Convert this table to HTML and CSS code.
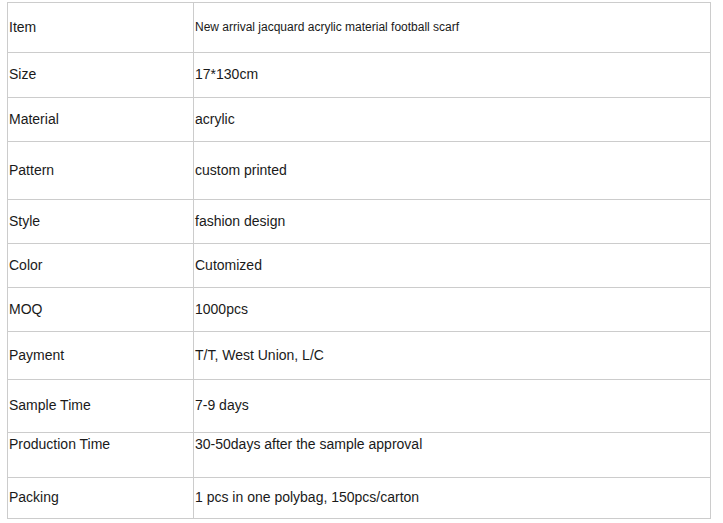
FILE: index.html
```html
<!DOCTYPE html>
<html>
<head>
<meta charset="utf-8">
<link rel="stylesheet" href="styles.css">
</head>
<body>
<table class="spec">
  <colgroup><col class="c-key"><col class="c-val"></colgroup>
  <tbody>
    <tr><td>Item</td><td class="small">New arrival jacquard acrylic material football scarf</td></tr>
    <tr><td>Size</td><td>17*130cm</td></tr>
    <tr><td>Material</td><td>acrylic</td></tr>
    <tr><td>Pattern</td><td>custom printed</td></tr>
    <tr><td>Style</td><td>fashion design</td></tr>
    <tr><td>Color</td><td>Cutomized</td></tr>
    <tr><td>MOQ</td><td>1000pcs</td></tr>
    <tr><td>Payment</td><td>T/T, West Union, L/C</td></tr>
    <tr><td>Sample Time</td><td>7-9 days</td></tr>
    <tr class="top"><td>Production Time</td><td>30-50days after the sample approval</td></tr>
    <tr><td>Packing</td><td>1 pcs in one polybag, 150pcs/carton</td></tr>
  </tbody>
</table>
</body>
</html>
```

FILE: styles.css
```css
html, body { margin: 0; padding: 0; background: #fff; }
body { padding: 2px 0 0 7px; font-family: "Liberation Sans", Arial, sans-serif; }
.spec {
  border-collapse: collapse;
  table-layout: fixed;
  width: 703px;
  font-size: 14px;
  color: #1a1a1a;
}
.c-key { width: 186px; }
.c-val { width: 517px; }
.spec td {
  border: 1px solid #cccccc;
  padding: 0 1px 2px;
  vertical-align: middle;
  line-height: 16px;
}
.spec td.small { font-size: 12px; }
.spec tr:nth-child(1) { height: 50px; }
.spec tr:nth-child(2) { height: 45px; }
.spec tr:nth-child(3) { height: 44px; }
.spec tr:nth-child(4) { height: 58px; }
.spec tr:nth-child(5) { height: 44px; }
.spec tr:nth-child(6) { height: 44px; }
.spec tr:nth-child(7) { height: 44px; }
.spec tr:nth-child(8) { height: 48px; }
.spec tr:nth-child(9) { height: 53px; }
.spec tr:nth-child(10) { height: 45px; }
.spec tr:nth-child(11) { height: 41px; }
.spec tr.top td { vertical-align: top; padding-top: 3px; }
```
